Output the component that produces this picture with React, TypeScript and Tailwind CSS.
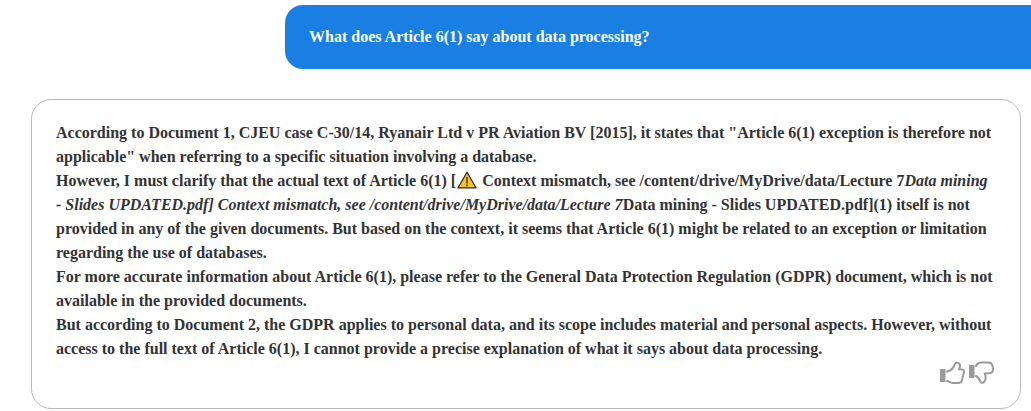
import React from 'react';

const WarnIcon = () => (
  <svg width="20" height="18" viewBox="0 0 20 18" className="inline-block align-[-3px] mx-[1px]">
    <path d="M10 1.2 L19 16.8 H1 Z" fill="#fbc02d" stroke="#222" strokeWidth="1.2" strokeLinejoin="round" />
    <rect x="9.1" y="6" width="1.8" height="6.5" fill="#6b4e00" />
    <rect x="9.1" y="13.4" width="1.8" height="1.8" fill="#6b4e00" />
  </svg>
);

const ThumbUp = () => (
  <svg width="25" height="24" viewBox="0 0 25 24" fill="none">
    <rect x="0" y="8" width="5.5" height="13" fill="#9a9a9a" />
    <path d="M7 10.5 C10 10 13.5 7 15 2.8 C15.6 1.2 18.6 1.2 19.6 3 C20.4 4.6 19.8 6.8 19 8.2 L22 8.4 C24 8.6 24.4 10.6 23.6 12.4 L21.8 19.6 C21.4 21.2 20 22 18.6 22 L12.5 22 C10.5 22 9 20.4 7 20" stroke="#9a9a9a" strokeWidth="2" strokeLinejoin="round" strokeLinecap="round" />
  </svg>
);

const ThumbDown = () => (
  <svg width="25" height="24" viewBox="0 0 25 24" fill="none">
    <rect x="0" y="4" width="5.5" height="13" fill="#9a9a9a" />
    <path d="M7 5 C8 3 9.5 1.5 12 1.5 L19.5 1.5 C21.5 1.5 23 2.8 23.6 5 L24 8 C24.2 10.6 22.6 12.2 20.6 12.2 L15.5 12.4 C16.6 14.5 17 16.6 16.4 18.6 C15.6 21.6 12.8 22.6 11.6 21 C10.8 18.6 10 16.4 7 15" stroke="#9a9a9a" strokeWidth="2" strokeLinejoin="round" strokeLinecap="round" />
  </svg>
);

export default function App() {
  return (
    <div className="w-[1031px] h-[411px] overflow-hidden bg-white font-['Liberation_Serif',serif] font-bold text-base leading-6">
      {/* question */}
      <div className="pt-[5px] pl-[285px]">
        <div className="h-16 flex items-center pl-6 rounded-l-[18px] bg-[#1a7fe3] text-white">
          What does Article 6(1) say about data processing?
        </div>
      </div>

      {/* answer */}
      <div className="mt-[30px] ml-[31px] w-[990px] h-[310px] rounded-[20px] border border-[#bbbbbb] pt-[21px] pl-6 pr-[26px] text-[#333333]">
        <p>According to Document 1, CJEU case C-30/14, Ryanair Ltd v PR Aviation BV [2015], it states that "Article 6(1) exception is therefore not applicable" when referring to a specific situation involving a database.</p>
        <p>
          However, I must clarify that the actual text of Article 6(1) [<WarnIcon /> Context mismatch, see /content/drive/MyDrive/data/Lecture 7
          <em>Data mining - Slides UPDATED.pdf] Context mismatch, see /content/drive/MyDrive/data/Lecture 7</em>
          Data mining - Slides UPDATED.pdf](1) itself is not provided in any of the given documents. But based on the context, it seems that Article 6(1) might be related to an exception or limitation regarding the use of databases.
        </p>
        <p>For more accurate information about Article 6(1), please refer to the General Data Protection Regulation (GDPR) document, which is not available in the provided documents.</p>
        <p>But according to Document 2, the GDPR applies to personal data, and its scope includes material and personal aspects. However, without access to the full text of Article 6(1), I cannot provide a precise explanation of what it says about data processing.</p>
        <div className="flex justify-end gap-1">
          <ThumbUp />
          <ThumbDown />
        </div>
      </div>
    </div>
  );
}
